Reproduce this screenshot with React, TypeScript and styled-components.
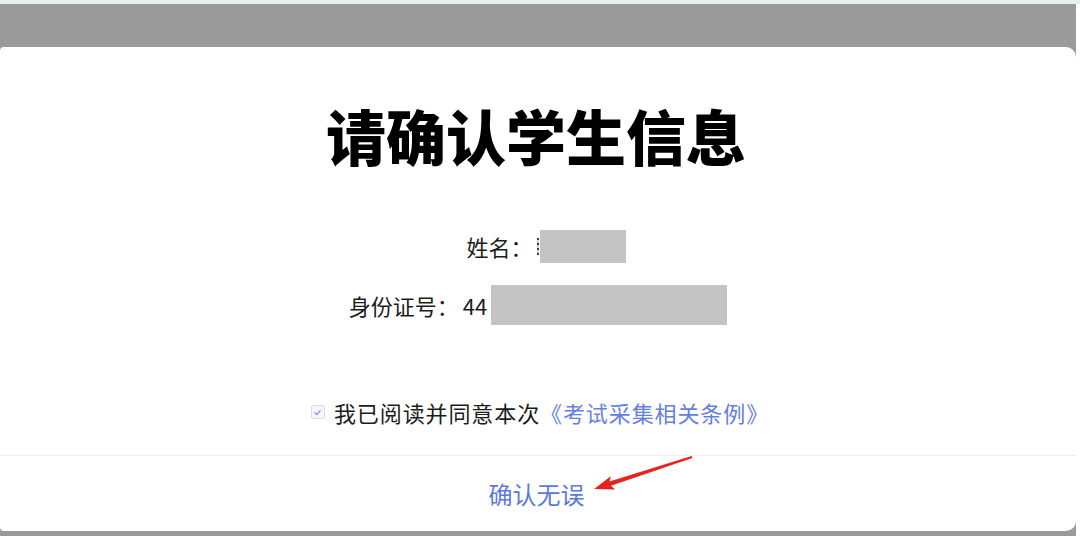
import styled, { createGlobalStyle } from 'styled-components';

const GlobalStyle = createGlobalStyle`
  html, body {
    margin: 0;
    padding: 0;
    background: #ffffff;
    font-family: "Noto Sans CJK SC", "Noto Sans", sans-serif;
  }
`;

const Screen = styled.div`
  width: 1080px;
  height: 536px;
  overflow: hidden;
  display: flex;
  flex-direction: column;
`;

const TopStrip = styled.div`
  height: 4px;
  background: #e6f2ee;
`;

const Backdrop = styled.div`
  width: 1076px;
  flex: 1;
  background: #9a9a9a;
  padding: 43px 0 5px;
  box-sizing: border-box;
  display: flex;
`;

const Card = styled.div`
  position: relative;
  flex: 1;
  background: #ffffff;
  border-radius: 4px 10px 10px 4px;
  display: flex;
  flex-direction: column;
`;

const Body = styled.div`
  flex: 1;
  display: flex;
  flex-direction: column;
  align-items: center;
`;

const Title = styled.h1`
  margin: 52px 0 0;
  padding-right: 4px;
  font-size: 60px;
  line-height: 72px;
  font-weight: 900;
  color: #000;
`;

const InfoRow = styled.div<{ $top: number; $shift?: number }>`
  margin-top: ${p => p.$top}px;
  margin-left: ${p => p.$shift ?? 0}px;
  display: flex;
  align-items: center;
  font-size: 22px;
  color: #1c1c1c;
`;

const Label = styled.span`
  line-height: 34px;
`;

const Digits = styled.span`
  margin-left: 4px;
  line-height: 34px;
`;

const Sliver = styled.span`
  display: inline-block;
  width: 2px;
  height: 17px;
  margin-left: 4px;
  margin-right: 1px;
  background: repeating-linear-gradient(#3a3a3a 0 2px, #d0d0d0 2px 5px);
`;

const Mask = styled.span<{ $w: number; $h: number; $gap?: number }>`
  display: inline-block;
  width: ${p => p.$w}px;
  height: ${p => p.$h}px;
  margin-left: ${p => p.$gap ?? 0}px;
  background: #c4c4c4;
`;

const Agreement = styled.label`
  margin-top: 74px;
  margin-left: 4px;
  display: flex;
  align-items: center;
  gap: 9px;
  font-size: 22px;
  line-height: 26px;
  letter-spacing: 0.9px;
  color: #1c1c1c;
`;

const Check = styled.span`
  width: 12px;
  height: 12px;
  border: 1px solid #d9dde8;
  border-radius: 2px;
  background: #f4f6fb;
  display: flex;
  align-items: center;
  justify-content: center;
`;

const Link = styled.span`
  color: #6480e4;
`;

const Footer = styled.div`
  height: 76px;
  border-top: 1px solid #eeeeee;
  box-sizing: border-box;
  display: flex;
  align-items: center;
  justify-content: center;
  padding-right: 3px;
`;

const ConfirmButton = styled.button`
  border: none;
  background: none;
  padding: 0;
  font-family: inherit;
  font-size: 24px;
  line-height: 30px;
  color: #5b79dc;
  cursor: pointer;
`;

const Arrow = styled.svg`
  position: absolute;
  left: 590px;
  top: 403px;
  width: 106px;
  height: 44px;
`;

export default function App() {
  return (
    <>
      <GlobalStyle />
      <Screen>
        <TopStrip />
        <Backdrop>
          <Card>
            <Body>
              <Title>请确认学生信息</Title>
              <InfoRow $top={58} $shift={16}>
                <Label>姓名：</Label>
                <Sliver />
                <Mask $w={86} $h={33} />
              </InfoRow>
              <InfoRow $top={22}>
                <Label>身份证号：</Label>
                <Digits>44</Digits>
                <Mask $w={236} $h={40} $gap={4} />
              </InfoRow>
              <Agreement>
                <Check>
                  <svg width="9" height="9" viewBox="0 0 10 10">
                    <path d="M2 5.2 L4.2 7.2 L8 2.8" fill="none" stroke="#8fa3d6" strokeWidth="1.4" strokeLinecap="round" strokeLinejoin="round" />
                  </svg>
                </Check>
                <span>
                  我已阅读并同意本次<Link>《考试采集相关条例》</Link>
                </span>
              </Agreement>
            </Body>
            <Footer>
              <ConfirmButton>确认无误</ConfirmButton>
            </Footer>
            <Arrow viewBox="0 0 106 44">
              <polygon
                points="4,39 20.8,26.2 19.5,31.6 101.6,5.9 102.4,8.1 20.9,35.8 25.2,39.5"
                fill="#e8231d"
              />
            </Arrow>
          </Card>
        </Backdrop>
      </Screen>
    </>
  );
}
